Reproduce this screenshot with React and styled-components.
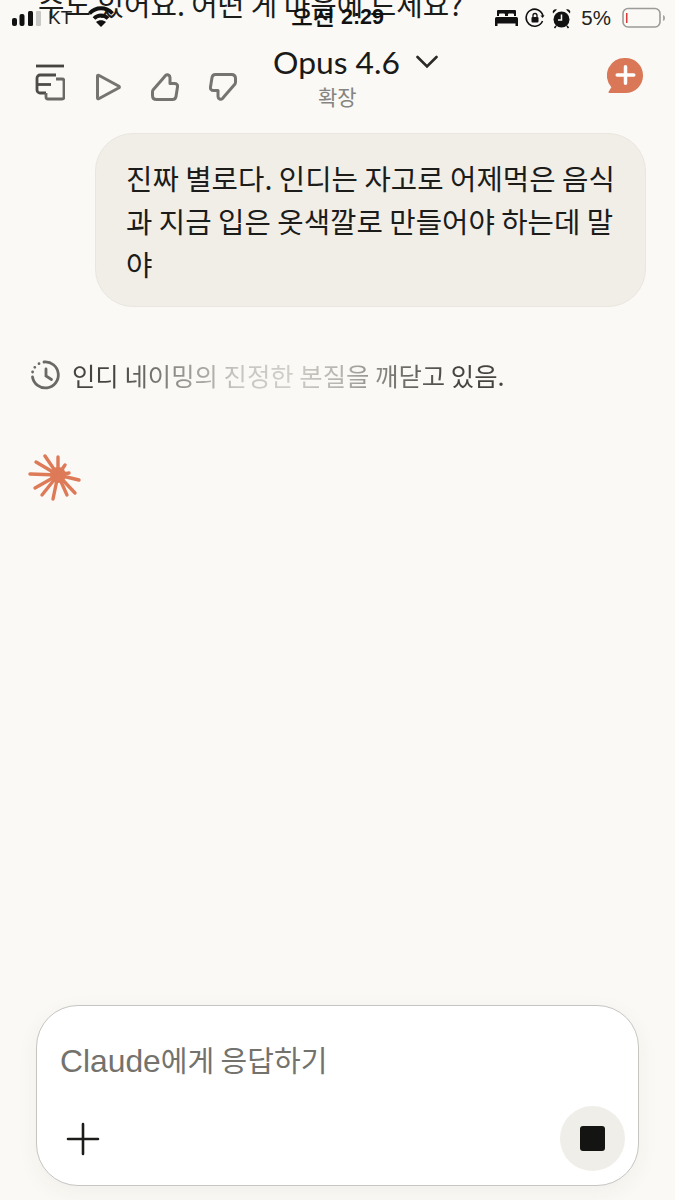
import React from 'react';
import styled, { createGlobalStyle } from 'styled-components';

const KR = `'Noto Sans CJK KR', 'Noto Sans', sans-serif`;

const Global = createGlobalStyle`
  html, body { margin: 0; padding: 0; background: #faf9f5; }
  * { box-sizing: border-box; }
`;

const Screen = styled.div`
  position: relative;
  width: 675px;
  height: 1200px;
  overflow: hidden;
  background: #faf9f5;
  font-family: ${KR};
  display: flex;
  flex-direction: column;
`;

const ScrolledText = styled.div`
  position: absolute;
  left: 38px;
  top: -17px;
  font-size: 28.8px;
  line-height: 42px;
  color: #1c1c1a;
  white-space: nowrap;
`;

const StatusBar = styled.div`
  position: relative;
  height: 37px;
  flex-shrink: 0;
  display: flex;
  align-items: center;
  justify-content: space-between;
  padding: 0 9px 1px 12px;
`;

const StatusGroup = styled.div`
  display: flex;
  align-items: center;
  gap: ${p => p.$gap || 0}px;
`;

const Clock = styled.div`
  position: absolute;
  left: 291px;
  top: 3px;
  font-family: 'Liberation Sans', sans-serif;
  font-size: 21.5px;
  line-height: 28px;
  font-weight: 700;
  color: #111;
  white-space: nowrap;
`;

const Carrier = styled.span`
  font-family: 'Liberation Sans', sans-serif;
  font-size: 19px;
  color: #222;
  margin: 0 13px 0 4px;
`;

const Percent = styled.span`
  font-family: 'Liberation Sans', sans-serif;
  font-size: 20.5px;
  color: #222;
  margin: 0 4px 0 3px;
`;

const Header = styled.header`
  position: relative;
  height: 76px;
  flex-shrink: 0;
  display: flex;
  align-items: flex-start;
  justify-content: space-between;
  padding: 27px 31px 0 35px;
`;

const Actions = styled.div`
  display: grid;
  grid-template-columns: 59px 57px 58px 28px;
  align-items: end;
`;

const TitleBlock = styled.div`
  position: absolute;
  left: 273px;
  top: 5px;
  display: flex;
  flex-direction: column;
  align-items: flex-start;
`;

const TitleRow = styled.div`
  display: flex;
  align-items: center;
  gap: 16px;
`;

const Title = styled.span`
  font-family: Lato, sans-serif;
  font-size: 31.8px;
  line-height: 40px;
  color: #1a1a18;
`;

const Subtitle = styled.span`
  margin-left: 45px;
  font-size: 21px;
  line-height: 28px;
  color: #858480;
`;

const NewChatSlot = styled.div`
  margin-top: -7px;
`;

const Main = styled.main`
  flex: 1;
  display: flex;
  flex-direction: column;
  padding: 20px 29px 0 30px;
`;

const Bubble = styled.div`
  align-self: flex-end;
  width: 551px;
  height: 174px;
  padding: 22px 28px 0 30px;
  background: #f1eee8;
  border: 1px solid #e9e6df;
  border-radius: 38px;
  font-size: 28.7px;
  line-height: 43px;
  color: #1c1c1a;
  word-break: break-all;
`;

const Thinking = styled.div`
  display: flex;
  align-items: center;
  gap: 10px;
  margin-top: 49px;
  height: 38px;
`;

const ShimmerText = styled.span`
  font-size: 25.4px;
  line-height: 38px;
  margin-top: -1px;
  white-space: nowrap;
  background: linear-gradient(90deg, #45443f 0%, #45443f 10%, #8f8e89 24%, #c6c5c0 38%, #cfcec9 50%, #b5b4af 62%, #7a7974 74%, #45443f 88%, #45443f 100%);
  -webkit-background-clip: text;
  background-clip: text;
  color: transparent;
`;

const Spark = styled.div`
  margin: 60px 0 0 -2px;
  width: 54px;
  height: 48px;
`;

const Composer = styled.div`
  flex-shrink: 0;
  width: 603px;
  height: 181px;
  margin: 0 0 14px 36px;
  padding: 33px 13px 14px 23px;
  display: flex;
  flex-direction: column;
  justify-content: space-between;
  background: #fff;
  border: 1px solid #c6c5c1;
  border-radius: 42px;
  box-shadow: 0 6px 22px rgba(60, 50, 30, 0.05);
`;

const Placeholder = styled.div`
  font-size: 29px;
  line-height: 40px;
  color: #73726d;
`;

const PlaceholderLatin = styled.span`
  font-family: 'Liberation Sans', sans-serif;
  font-size: 31.8px;
`;

const ComposerRow = styled.div`
  display: flex;
  align-items: center;
  justify-content: space-between;
  padding-left: 6px;
`;

const StopButton = styled.div`
  width: 65px;
  height: 65px;
  border-radius: 50%;
  background: #f0eee8;
  display: flex;
  align-items: center;
  justify-content: center;
`;

const StopSquare = styled.div`
  width: 25px;
  height: 25px;
  border-radius: 3px;
  background: #141413;
`;

const Signal = () => (
  <svg width="29" height="18" viewBox="0 0 29 18">
    <rect x="0" y="9" width="5" height="8" rx="2" fill="#111" />
    <rect x="7.500" y="5" width="5" height="12" rx="2" fill="#111" />
    <rect x="16" y="2" width="5" height="15" rx="1.500" fill="#111" />
    <rect x="24" y="2" width="5" height="15" rx="1" fill="#c8c8c6" />
  </svg>
);

const Wifi = () => (
  <svg width="26" height="21" viewBox="0 0 26 21" fill="none" stroke="#111" strokeWidth="3.800" style={{ marginTop: '-3px' }}>
    <path d="M1.500 7.500C8 .5 18 .5 24.500 7.500" />
    <path d="M6 12.500C10 8.500 16 8.500 20 12.500" />
    <path d="M13 21l-5-5c2.800-2.200 7.200-2.200 10 0z" fill="#111" stroke="none" />
  </svg>
);

const Bed = () => (
  <svg width="23" height="18" viewBox="0 0 23 18" fill="#111">
    <path d="M3 1h17a1 1 0 0 1 1 1v5h-2V5.500a1 1 0 0 0-1-1h-4a1 1 0 0 0-1 1V7h-3V5.500a1 1 0 0 0-1-1H5a1 1 0 0 0-1 1V7H2V2a1 1 0 0 1 1-1z" />
    <path d="M1.500 8h20A1.500 1.500 0 0 1 23 9.500V17h-2.500v-2.500h-18V17H0V9.500A1.500 1.500 0 0 1 1.500 8z" />
  </svg>
);

const RotationLock = () => (
  <svg width="20" height="20" viewBox="0 0 20 20" fill="none" stroke="#111" strokeWidth="1.600">
    <path d="M17.500 13A8.500 8.500 0 1 1 18 8" />
    <path d="M15.500 7.500h4l-2 2.500z" fill="#111" stroke="none" />
    <rect x="6.500" y="9" width="7" height="5.500" rx="1" fill="#111" stroke="none" />
    <path d="M8 9V7.500a2 2 0 0 1 4 0V9" strokeWidth="1.300" />
  </svg>
);

const Alarm = () => (
  <svg width="19" height="21" viewBox="0 0 19 21" fill="none">
    <circle cx="9.500" cy="11.500" r="8" fill="#111" />
    <path d="M9.500 6.500v5.500H6" stroke="#faf9f5" strokeWidth="1.500" />
    <path d="M1 5.500a3 3 0 0 1 4-4zM18 5.500a3 3 0 0 0-4-4z" fill="#111" />
    <path d="M4 18l-1.500 2M15 18l1.500 2" stroke="#111" strokeWidth="1.600" />
  </svg>
);

const Battery = () => (
  <svg width="44" height="22" viewBox="0 0 44 22" fill="none">
    <rect x="1" y="1.500" width="37" height="18.500" rx="5" stroke="#9c9b98" strokeWidth="1.600" />
    <rect x="4" y="6" width="1.500" height="10" fill="#d83a3a" />
    <path d="M41 8c1.500.5 2 1.500 2 3s-.5 2.500-2 3z" fill="#a8a7a4" />
  </svg>
);

const SidebarIcon = () => (
  <svg width="30" height="37" viewBox="0 0 30 37" fill="none" stroke="#62615d" strokeWidth="2.800">
    <path d="M1 2h28" stroke="#45443f" />
    <path d="M21 11H5a3 3 0 0 0-3 3v12a3 3 0 0 0 3 3h6" stroke="#4d4c48" />
    <path d="M2 20.500h14" stroke="#4d4c48" />
    <path d="M21 15h6a2 2 0 0 1 2 2v16a2 2 0 0 1-2 2H13a2 2 0 0 1-2-2v-4" stroke="#6a6965" />
  </svg>
);

const PlayIcon = () => (
  <svg width="28" height="28" viewBox="0 0 28 28" fill="none" stroke="#757470" strokeWidth="3" strokeLinejoin="round">
    <path d="M3.500 3v22a.8.8 0 0 0 1.200.7L25 14.800a1 1 0 0 0 0-1.600L4.700 2.300A.8.8 0 0 0 3.500 3z" />
  </svg>
);

const ThumbUp = ({ down }) => (
  <svg width="28" height="28" viewBox="0 0 28 28" fill="none" stroke="#757470" strokeWidth="3" strokeLinejoin="round" style={down ? { transform: 'rotate(180deg)' } : undefined}>
    <path d="M2 17L12 5.500 14.500 2.500c1.500-1.500 4.500-.5 4.500 2v6h4.500c2 0 3.500 1.500 3 3.500l-1.500 9.500c-.3 1.800-1.700 3-3.500 3H5.500C3 26.500 1.500 25 1.500 22.500V19c0-.8.100-1.400.5-2z" />
  </svg>
);

const Chevron = () => (
  <svg width="22" height="14" viewBox="0 0 22 14" fill="none" stroke="#2a2a27" strokeWidth="2.600" strokeLinecap="round">
    <path d="M1.500 2L11 11.500 20.500 2" />
  </svg>
);

const NewChat = () => (
  <svg width="37" height="37" viewBox="0 0 38 38">
    <path d="M19 1a18 18 0 1 1 0 36H2.500c-1 0-1.300-.8-.7-1.500L4.500 31A18 18 0 0 1 19 1z" fill="#d97757" />
    <path d="M19 10v17M10.500 18.500h17" stroke="#fff" strokeWidth="3.600" strokeLinecap="round" />
  </svg>
);

const Clockwise = () => (
  <svg width="32" height="32" viewBox="0 0 32 32" fill="none" stroke="#6a6965" strokeWidth="2.800" strokeLinecap="round">
    <path d="M14 3a13 13 0 1 1-11.500 15" />
    <path d="M16 10v7l5.500 3.500" />
    <path d="M9 4.700h.01M4.800 8.300h.01M2.600 13h.01" strokeWidth="2.800" />
  </svg>
);

// ray tips, read off the reference
const rayTips = [
  [17, 2], [30, 3], [8, 8], [37, 11], [2, 20], [41, 19], [51, 26], [7, 34], [47, 39], [14, 41], [39, 41], [25, 45],
];

const Sparkle = () => (
  <svg width="54" height="48" viewBox="0 0 54 48" stroke="#dd7a58" strokeWidth="3.400" strokeLinecap="round">
    <circle cx="30" cy="21" r="8" fill="#dd7a58" stroke="none" />
    {rayTips.map(([x, y]) => (
      <line key={`${x}-${y}`} x1="30" y1="21" x2={x} y2={y} />
    ))}
  </svg>
);

const Plus = () => (
  <svg width="34" height="34" viewBox="0 0 34 34" stroke="#1c1c1a" strokeWidth="2.600" strokeLinecap="round">
    <path d="M17 2v30M2 17h30" />
  </svg>
);

export default function App() {
  return (
    <>
      <Global />
      <Screen>
        <ScrolledText>수도 있어요. 어떤 게 마음에 드세요?</ScrolledText>
        <StatusBar>
          <StatusGroup $gap={3}>
            <Signal />
            <Carrier>KT</Carrier>
            <Wifi />
          </StatusGroup>
          <Clock>오전 2:29</Clock>
          <StatusGroup $gap={7}>
            <Bed />
            <RotationLock />
            <Alarm />
            <Percent>5%</Percent>
            <Battery />
          </StatusGroup>
        </StatusBar>
        <Header>
          <Actions>
            <SidebarIcon />
            <PlayIcon />
            <ThumbUp />
            <ThumbUp down />
          </Actions>
          <TitleBlock>
            <TitleRow>
              <Title>Opus 4.6</Title>
              <Chevron />
            </TitleRow>
            <Subtitle>확장</Subtitle>
          </TitleBlock>
          <NewChatSlot>
            <NewChat />
          </NewChatSlot>
        </Header>
        <Main>
          <Bubble>진짜 별로다. 인디는 자고로 어제먹은 음식과 지금 입은 옷색깔로 만들어야 하는데 말야</Bubble>
          <Thinking>
            <Clockwise />
            <ShimmerText>인디 네이밍의 진정한 본질을 깨닫고 있음.</ShimmerText>
          </Thinking>
          <Spark>
            <Sparkle />
          </Spark>
        </Main>
        <Composer>
          <Placeholder>
            <PlaceholderLatin>Claude</PlaceholderLatin>에게 응답하기
          </Placeholder>
          <ComposerRow>
            <Plus />
            <StopButton>
              <StopSquare />
            </StopButton>
          </ComposerRow>
        </Composer>
      </Screen>
    </>
  );
}
